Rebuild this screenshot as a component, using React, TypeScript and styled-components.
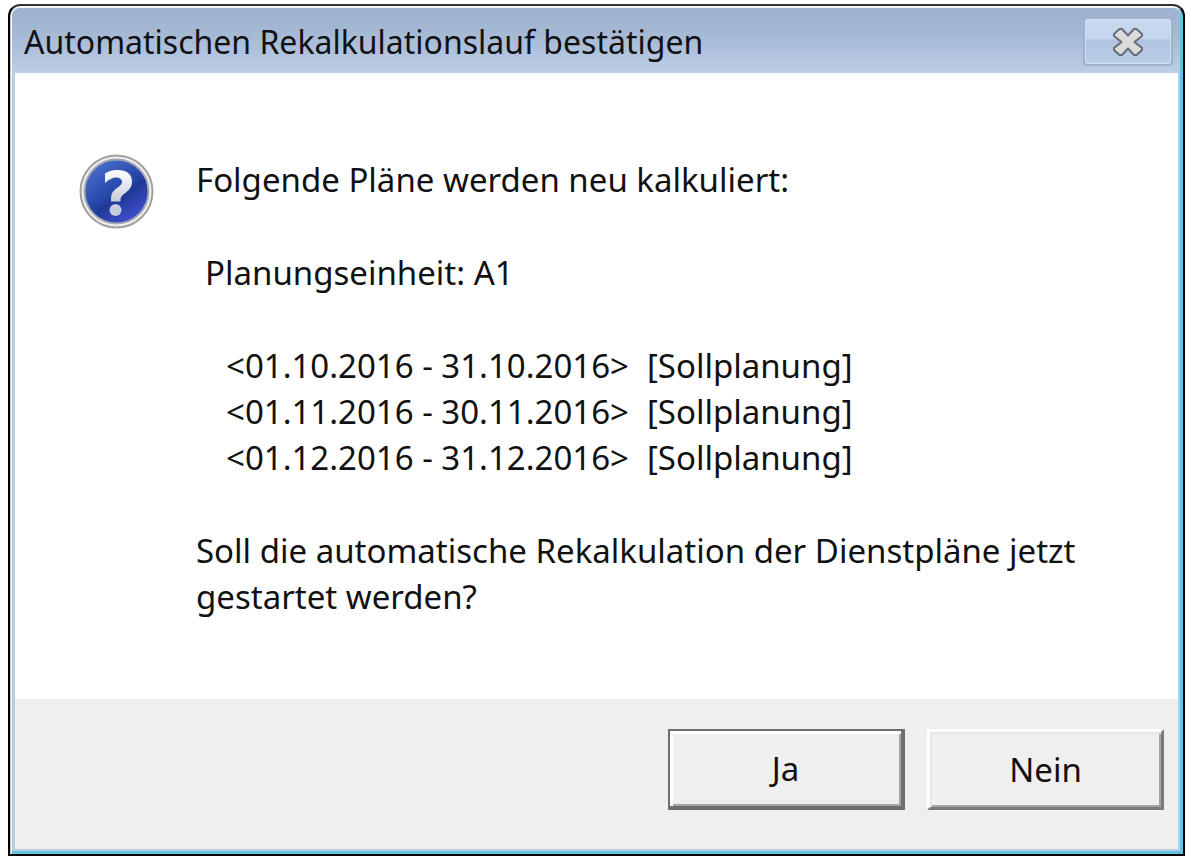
import React from 'react';
import styled, { createGlobalStyle, css } from 'styled-components';

const GlobalStyle = createGlobalStyle`
  *, *::before, *::after { box-sizing: border-box; }
  body {
    margin: 0;
    background: #fff;
    color: #111;
    font-family: "Segoe UI", "Noto Sans", "Open Sans", sans-serif;
  }
`;

const Desktop = styled.main`
  padding: 4px 11px 2px 8px;
`;

const Dialog = styled.section`
  border: 2px solid #000;
  border-top-color: #333;
  border-radius: 12px 12px 0 0;
  background: #b9cde5;
  box-shadow: inset 1px 0 0 #c8c8c8, inset 2px 2px 0 #f4f6fa, inset -3px -3px 0 #5fc4de;
  padding: 2px 5px 5px;
`;

const TitleBar = styled.header`
  display: flex;
  align-items: center;
  justify-content: space-between;
  height: 65px;
  padding: 2px 7px 0 12px;
  margin: 0 -2px 0 -3px;
  border-radius: 8px 8px 0 0;
  background: linear-gradient(#9db2ce, #a5b9d5 40%, #bccde6);
`;

const Title = styled.h1`
  margin: 0;
  font-size: 32px;
  font-weight: 400;
  line-height: 46px;
  white-space: nowrap;
`;

const CloseButton = styled.button`
  display: flex;
  align-items: center;
  justify-content: center;
  width: 90px;
  height: 49px;
  padding: 0;
  border: 2px solid #9fb1cd;
  border-radius: 4px;
  background: linear-gradient(#c9daf0, #c3d4ec 45%, #b1c4df 46%, #bbcee8);
  box-shadow: inset 0 0 0 1px #d3e0f2;
`;

const Body = styled.div`
  display: flex;
  align-items: flex-start;
  gap: 41px;
  padding: 81px 64px 79px;
  background: #fff;
`;

const IconFrame = styled.div`
  flex: none;
  width: 76px;
  height: 76px;
`;

const Message = styled.div`
  display: flex;
  flex-direction: column;
  gap: 47px;
  padding-top: 3px;
  font-size: 33px;
  line-height: 46px;
`;

const Paragraph = styled.p<{ $indent?: boolean }>`
  margin: 0;
  padding-left: ${({ $indent }) => ($indent ? '9px' : '0')};
`;

const PlanList = styled.ul`
  margin: 0;
  padding: 0 0 0 30px;
  list-style: none;
`;

const PlanRow = styled.li`
  display: flex;
  gap: 18px;
  white-space: nowrap;
`;

const Footer = styled.footer`
  display: flex;
  justify-content: flex-end;
  gap: 22px;
  padding: 30px 14px 39px;
  background: #efefef;
`;

const raised = css`
  border: 3px solid;
  border-color: #fff #7b7b7b #7b7b7b #fff;
  box-shadow: inset 2px 2px 0 #e6e6e6, inset -2px -2px 0 #a5a5a5;
`;

const focused = css`
  border: 2px solid #6e6e6e;
  border-right-width: 4px;
  border-bottom-width: 4px;
  box-shadow: inset 3px 3px 0 #fff, inset -2px -2px 0 #a5a5a5;
`;

const ActionButton = styled.button<{ $primary?: boolean }>`
  width: 237px;
  height: 81px;
  padding: 0;
  background: #efefef;
  color: #111;
  font-family: inherit;
  font-size: 33px;
  line-height: 46px;
  ${({ $primary }) => ($primary ? focused : raised)}
`;

const plans = [
  { period: '<01.10.2016 - 31.10.2016>', kind: '[Sollplanung]' },
  { period: '<01.11.2016 - 30.11.2016>', kind: '[Sollplanung]' },
  { period: '<01.12.2016 - 31.12.2016>', kind: '[Sollplanung]' },
];

const QuestionIcon = () => (
  <svg width="76" height="76" viewBox="0 0 76 76" aria-hidden="true">
    <defs>
      <linearGradient id="ball" x1="0.15" y1="0.05" x2="0.75" y2="0.95">
        <stop offset="0" stopColor="#4a70cc" />
        <stop offset="0.5" stopColor="#2747ab" />
        <stop offset="0.62" stopColor="#1f3896" />
        <stop offset="1" stopColor="#404fd2" />
      </linearGradient>
      <linearGradient id="mark" x1="0" y1="0" x2="0" y2="1">
        <stop offset="0" stopColor="#fff" />
        <stop offset="1" stopColor="#c6ccda" />
      </linearGradient>
    </defs>
    <circle cx="37.5" cy="37.5" r="36" fill="#efefef" stroke="#a0a0a0" strokeWidth="2" />
    <circle cx="37.5" cy="37.5" r="32" fill="url(#ball)" stroke="#a5a8b2" strokeWidth="2" />
    <path
      d="M26 19.500 Q31 16 38 16 Q53 16 53 28 Q53 34 47 38.500 Q41.500 42 41.500 45 V47.500 H32 V44 Q32 38 38 34 Q43 31 43 28 Q43 23.500 37 23.500 Q32 23.500 26 29 Z"
      fill="url(#mark)"
    />
    <circle cx="36.500" cy="56" r="6" fill="#c6ccda" />
  </svg>
);

const CloseIcon = () => (
  <svg width="32" height="30" viewBox="0 0 32 30" aria-hidden="true">
    <path
      d="M7.500 2 H10 L16 8.500 L22 2 H24.500 L30 7 V9 L22.500 15 L30 21 V23 L24.500 28 H22 L16 21.500 L10 28 H7.500 L2 23 V21 L9.500 15 L2 9 V7 Z"
      fill="#dadada"
      stroke="#686c7c"
      strokeWidth="2"
      strokeLinejoin="round"
    />
  </svg>
);

export default function App() {
  return (
    <>
      <GlobalStyle />
      <Desktop>
        <Dialog role="dialog" aria-labelledby="dialog-title">
          <TitleBar>
            <Title id="dialog-title">Automatischen Rekalkulationslauf bestätigen</Title>
            <CloseButton type="button" aria-label="Schließen">
              <CloseIcon />
            </CloseButton>
          </TitleBar>
          <Body>
            <IconFrame>
              <QuestionIcon />
            </IconFrame>
            <Message>
              <Paragraph>Folgende Pläne werden neu kalkuliert:</Paragraph>
              <Paragraph $indent>Planungseinheit: A1</Paragraph>
              <PlanList>
                {plans.map((plan) => (
                  <PlanRow key={plan.period}>
                    <span>{plan.period}</span>
                    <span>{plan.kind}</span>
                  </PlanRow>
                ))}
              </PlanList>
              <Paragraph>
                Soll die automatische Rekalkulation der Dienstpläne jetzt gestartet werden?
              </Paragraph>
            </Message>
          </Body>
          <Footer>
            <ActionButton type="button" $primary>
              Ja
            </ActionButton>
            <ActionButton type="button">Nein</ActionButton>
          </Footer>
        </Dialog>
      </Desktop>
    </>
  );
}
